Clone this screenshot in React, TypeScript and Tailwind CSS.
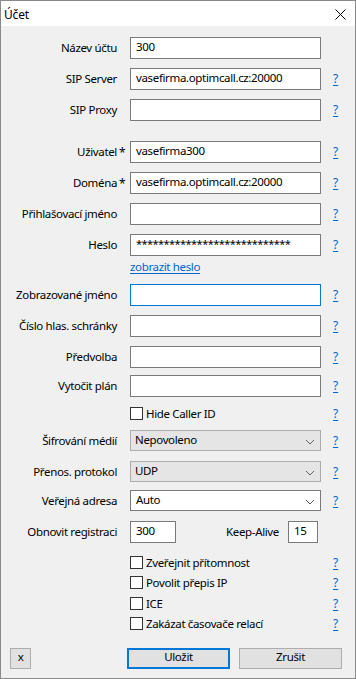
import React from "react";

const font = { fontFamily: '"Noto Sans", "Open Sans", sans-serif' };
const T = "text-[11.5px] tracking-[-0.35px] leading-none";

function Help() {
  return (
    <span className="ml-[12px] text-[12px] leading-none text-[#0066cc] underline underline-offset-2">?</span>
  );
}

function Label({ text, req }: { text: string; req?: boolean }) {
  return (
    <div className="w-[116px] shrink-0 flex justify-end">
      <span className={`relative ${T} text-black whitespace-nowrap`}>
        {text}
        {req && <span className="absolute left-[calc(100%+2px)] top-[1px] text-[12px]">*</span>}
      </span>
    </div>
  );
}

function TextRow({
  label,
  value,
  req,
  mt,
  focus,
  help = true,
  mono,
}: {
  label: string;
  value?: string;
  req?: boolean;
  mt: string;
  focus?: boolean;
  help?: boolean;
  mono?: boolean;
}) {
  return (
    <div className={`flex items-center h-[22px] ${mt}`}>
      <Label text={label} req={req} />
      <div
        className={`ml-[13px] w-[191px] h-[22px] bg-white border flex items-center pl-[5px] ${T} text-black whitespace-nowrap overflow-hidden ${
          focus ? "border-[#0078d7]" : "border-[#7a7a7a]"
        }`}
      >
        <span className={mono ? "text-[11px] tracking-[-0.55px] relative top-[-2px]" : "relative top-[-1px]"}>{value}</span>
      </div>
      {help && <Help />}
    </div>
  );
}

function Chevron() {
  return (
    <svg width="10" height="6" viewBox="0 0 10 6" className="absolute right-[5px] top-[8px]">
      <path d="M1 1 L5 5 L9 1" stroke="#606060" strokeWidth="1" fill="none" />
    </svg>
  );
}

function ComboRow({ label, value, mt, disabled }: { label: string; value: string; mt: string; disabled?: boolean }) {
  return (
    <div className={`flex items-center h-[21px] ${mt}`}>
      <Label text={label} />
      <div
        className={`relative ml-[13px] w-[191px] h-[21px] border flex items-center ${T} text-black ${
          disabled ? "bg-[#e5e5e5] border-[#adadad] pl-[4px]" : "bg-white border-[#7a7a7a] pl-[5px]"
        }`}
      >
        <span className="relative top-[-1px]">{value}</span>
        <Chevron />
      </div>
      <Help />
    </div>
  );
}

function CheckRow({ label, mt }: { label: string; mt: string }) {
  return (
    <div className={`flex items-center h-[13px] ${mt}`}>
      <div className="w-[129px] shrink-0" />
      <div className="w-[13px] h-[13px] border border-[#333333] bg-white shrink-0" />
      <span className={`ml-[3px] w-[175px] ${T} text-black whitespace-nowrap`}>{label}</span>
      <Help />
    </div>
  );
}

export default function App() {
  return (
    <div
      style={font}
      className="w-[356px] h-[679px] border border-[#8a8a8a] bg-[#f0f0f0] flex flex-col overflow-hidden"
    >
      <div className="h-[25px] bg-white flex items-center justify-between shrink-0">
        <span className="ml-[3px] text-[12px] tracking-[-0.2px] leading-none text-black relative top-[1px]">Účet</span>
        <svg width="11" height="11" viewBox="0 0 11 11" className="mr-[9px] relative top-[1px]">
          <path d="M0.5 0.5 L10.5 10.5 M10.5 0.5 L0.5 10.5" stroke="#000" strokeWidth="1" />
        </svg>
      </div>
      <div className="flex flex-col">
        <TextRow label="Název účtu" value="300" mt="mt-[11px]" help={false} />
        <TextRow label="SIP Server" value="vasefirma.optimcall.cz:20000" mt="mt-[9px]" />
        <TextRow label="SIP Proxy" value="" mt="mt-[9px]" />
        <TextRow label="Uživatel" req value="vasefirma300" mt="mt-[20px]" />
        <TextRow label="Doména" req value="vasefirma.optimcall.cz:20000" mt="mt-[9px]" />
        <TextRow label="Přihlašovací jméno" value="" mt="mt-[9px]" />
        <TextRow label="Heslo" value="****************************" mt="mt-[9px]" mono />
        <div className="flex items-center h-[14px] mt-[4px]">
          <div className="w-[129px] shrink-0" />
          <span className={`${T} text-[#0066cc] underline underline-offset-2`}>zobrazit heslo</span>
        </div>
        <TextRow label="Zobrazované jméno" value="" mt="mt-[10px]" focus />
        <TextRow label="Číslo hlas. schránky" value="" mt="mt-[9px]" />
        <TextRow label="Předvolba" value="" mt="mt-[9px]" />
        <TextRow label="Vytočit plán" value="" mt="mt-[7px]" />
        <CheckRow label="Hide Caller ID" mt="mt-[10px]" />
        <ComboRow label="Šifrování médií" value="Nepovoleno" mt="mt-[10px]" disabled />
        <ComboRow label="Přenos. protokol" value="UDP" mt="mt-[10px]" disabled />
        <ComboRow label="Veřejná adresa" value="Auto" mt="mt-[8px]" />
        <div className="flex items-center h-[22px] mt-[10px]">
          <Label text="Obnovit registraci" />
          <div className={`ml-[13px] w-[46px] h-[22px] bg-white border border-[#7a7a7a] flex items-center pl-[5px] ${T}`}>
            <span className="relative top-[-1px]">300</span>
          </div>
          <div className="w-[103px] flex justify-end">
            <span className={`${T} text-black whitespace-nowrap`}>Keep-Alive</span>
          </div>
          <div className={`ml-[9px] w-[30px] h-[22px] bg-white border border-[#7a7a7a] flex items-center pl-[5px] ${T}`}>
            <span className="relative top-[-1px]">15</span>
          </div>
        </div>
        <CheckRow label="Zveřejnit přítomnost" mt="mt-[13px]" />
        <CheckRow label="Povolit přepis IP" mt="mt-[7px]" />
        <CheckRow label="ICE" mt="mt-[8px]" />
        <CheckRow label="Zakázat časovače relací" mt="mt-[7px]" />
        <div className="flex items-center h-[22px] mt-[17px]">
          <div className={`ml-[9px] w-[21px] h-[21px] bg-[#e1e1e1] border border-[#adadad] flex items-center justify-center ${T}`}>
            <span className="relative top-[-1px]">x</span>
          </div>
          <div className={`ml-[96px] w-[103px] h-[21px] bg-[#e1e1e1] border-2 border-[#0078d7] flex items-center justify-center ${T}`}>
            <span className="relative top-[-1px]">Uložit</span>
          </div>
          <div className={`ml-[9px] w-[103px] h-[21px] bg-[#e1e1e1] border border-[#adadad] flex items-center justify-center ${T}`}>
            <span className="relative top-[-1px]">Zrušit</span>
          </div>
        </div>
      </div>
    </div>
  );
}
